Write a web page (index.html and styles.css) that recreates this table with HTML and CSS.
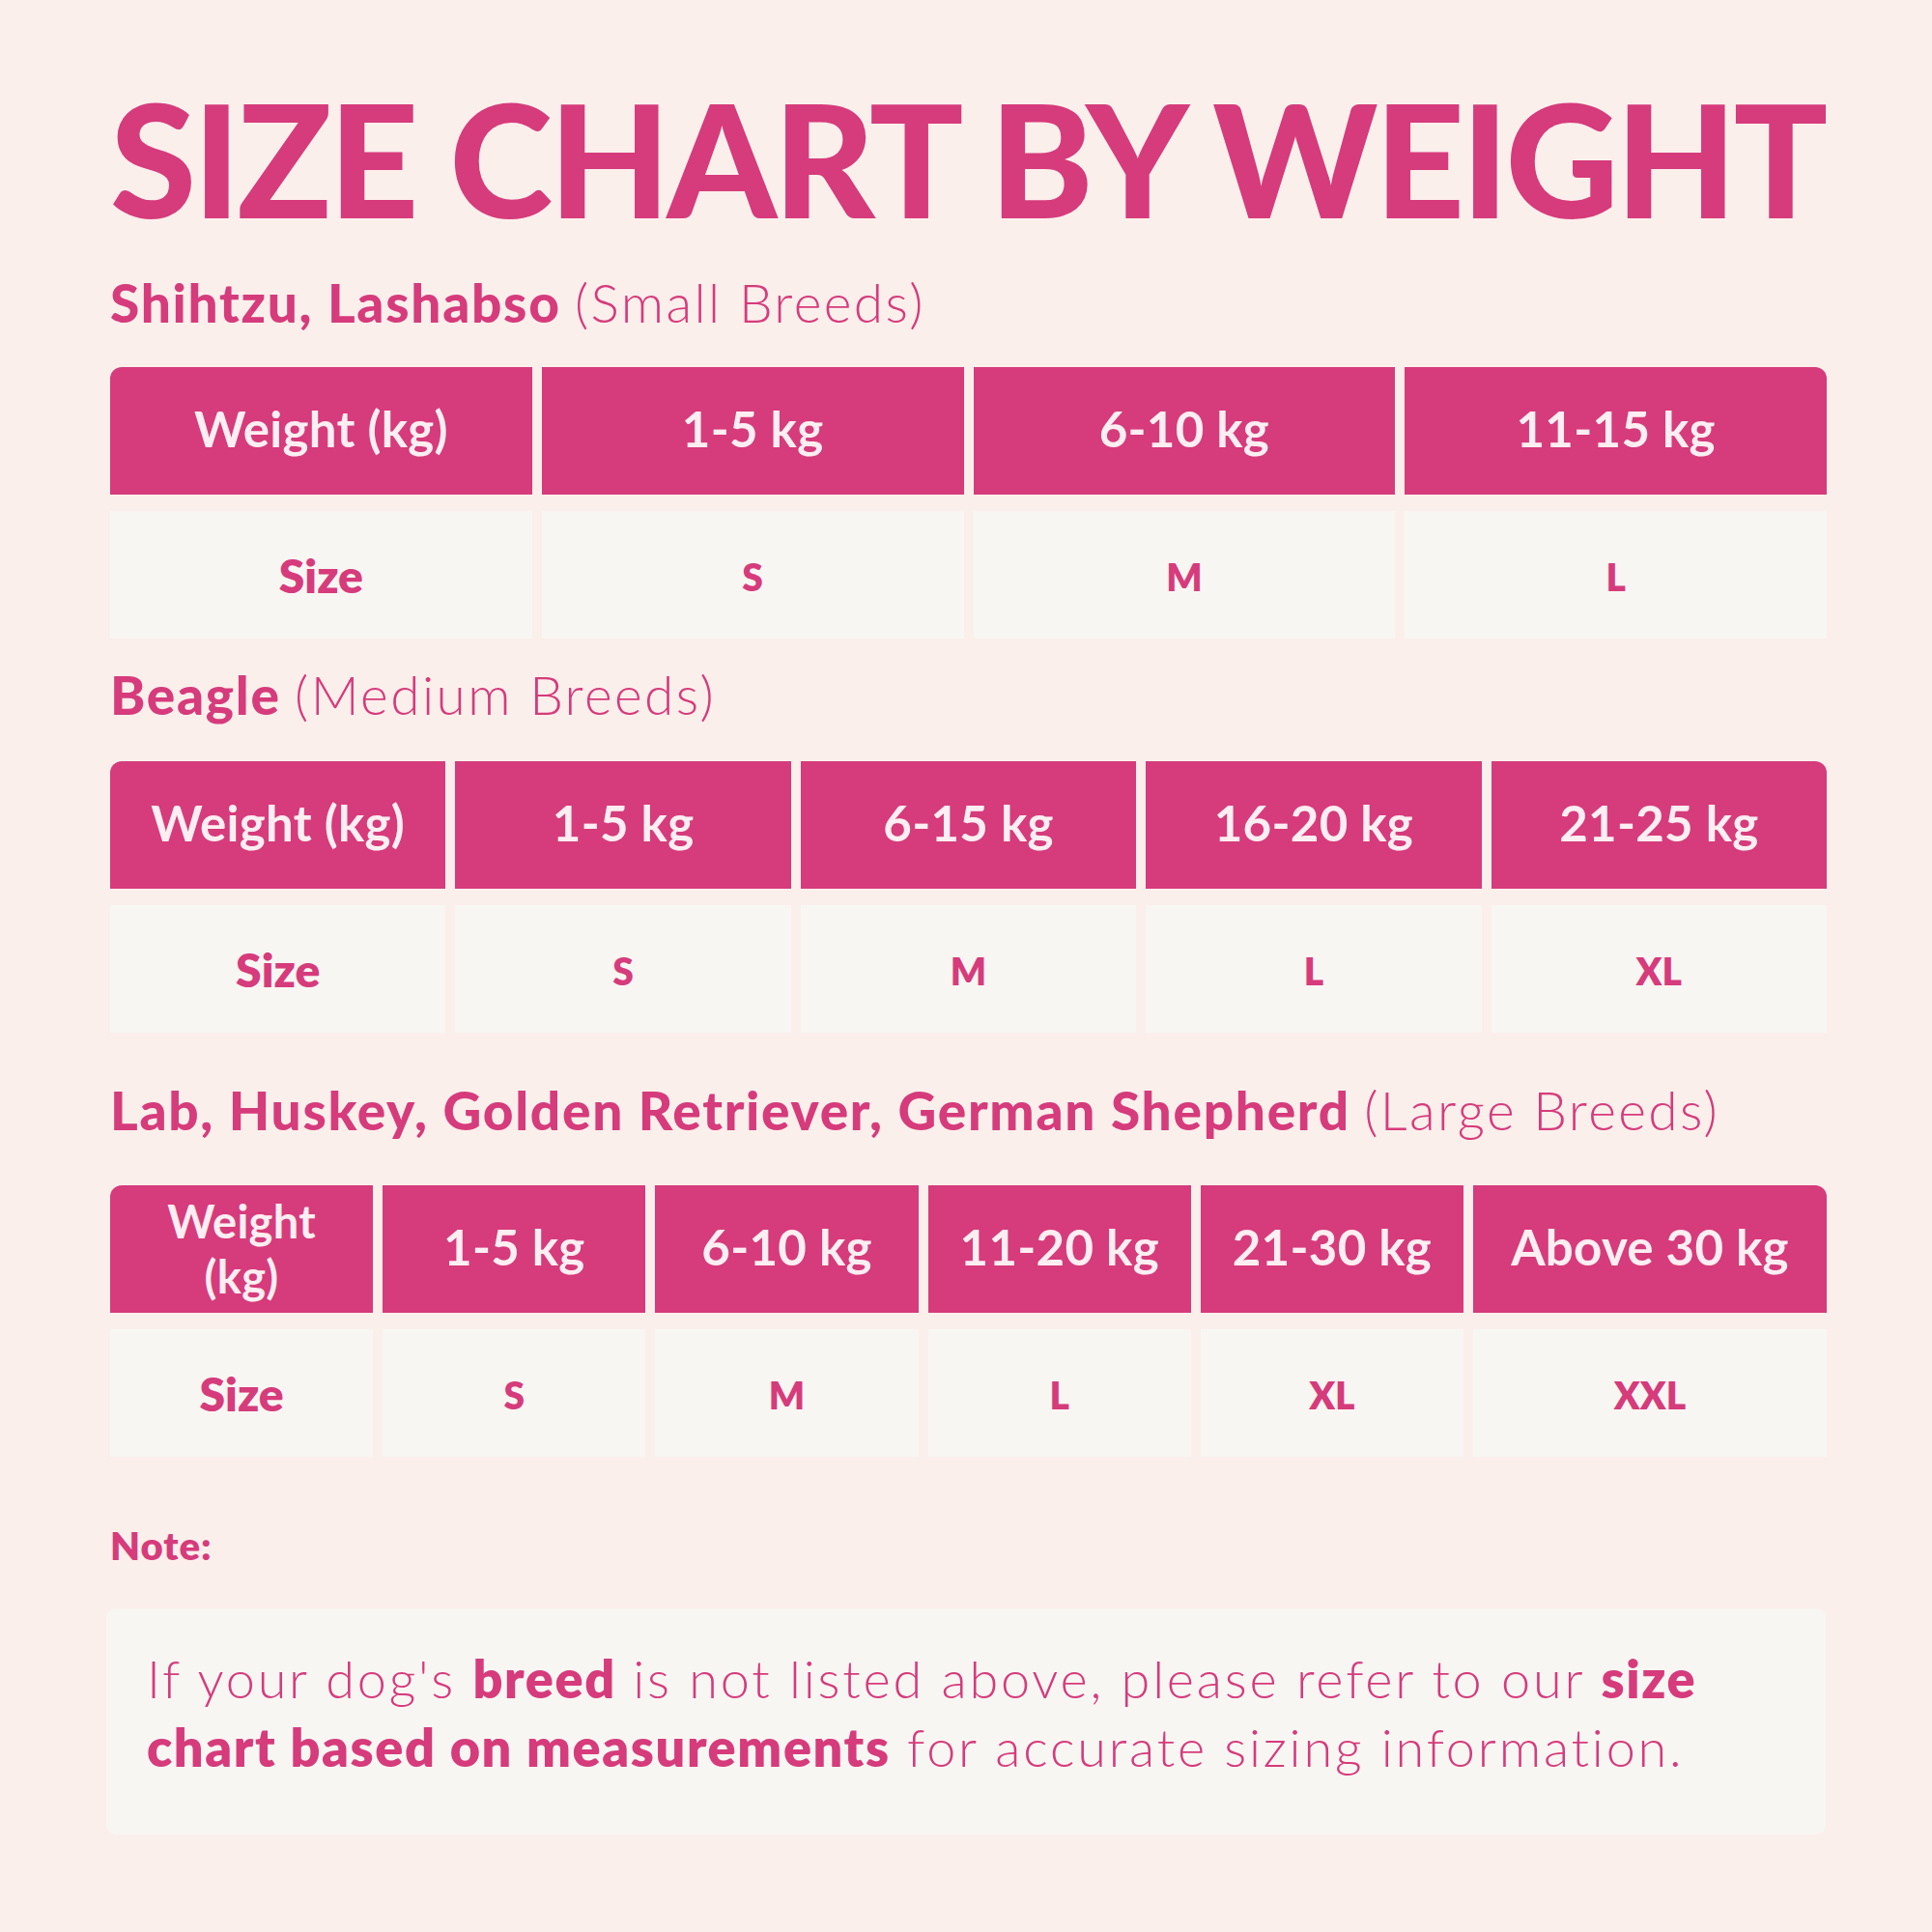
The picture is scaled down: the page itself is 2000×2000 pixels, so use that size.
FILE: index.html
```html
<!DOCTYPE html>
<html lang="en">
<head>
<meta charset="utf-8">
<title>Size Chart by Weight</title>
<link rel="stylesheet" href="styles.css">
</head>
<body>
<main class="page">
  <h1 class="title">SIZE CHART BY WEIGHT</h1>

  <h2 class="breed breed-1"><b>Shihtzu, Lashabso</b> <span>(Small Breeds)</span></h2>
  <div class="chart cols-4">
    <div class="th first">Weight (kg)</div>
    <div class="th">1-5 kg</div>
    <div class="th">6-10 kg</div>
    <div class="th last">11-15 kg</div>
    <div class="td label">Size</div>
    <div class="td">S</div>
    <div class="td">M</div>
    <div class="td">L</div>
  </div>

  <h2 class="breed breed-2"><b>Beagle</b> <span>(Medium Breeds)</span></h2>
  <div class="chart cols-5">
    <div class="th first">Weight (kg)</div>
    <div class="th">1-5 kg</div>
    <div class="th">6-15 kg</div>
    <div class="th">16-20 kg</div>
    <div class="th last">21-25 kg</div>
    <div class="td label">Size</div>
    <div class="td">S</div>
    <div class="td">M</div>
    <div class="td">L</div>
    <div class="td">XL</div>
  </div>

  <h2 class="breed breed-3"><b>Lab, Huskey, Golden Retriever, German Shepherd</b> <span>(Large Breeds)</span></h2>
  <div class="chart cols-6">
    <div class="th first narrow">Weight<br>(kg)</div>
    <div class="th">1-5 kg</div>
    <div class="th">6-10 kg</div>
    <div class="th">11-20 kg</div>
    <div class="th">21-30 kg</div>
    <div class="th last">Above 30 kg</div>
    <div class="td label">Size</div>
    <div class="td">S</div>
    <div class="td">M</div>
    <div class="td">L</div>
    <div class="td">XL</div>
    <div class="td">XXL</div>
  </div>

  <p class="note-label">Note:</p>
  <div class="note">
    <p>If your dog's <b>breed</b> is not listed above, please refer to our <b>size</b><br><b>chart based on measurements</b> for accurate sizing information.</p>
  </div>
</main>
</body>
</html>
```

FILE: styles.css
```css
html, body {
  margin: 0;
  padding: 0;
}
body {
  background: #fbefec;
  font-family: "Lato", "Liberation Sans", sans-serif;
  color: #d63b7b;
}
.page {
  width: 1777px;
  padding: 83px 0 0 114px;
}
.title {
  margin: 0;
  font-size: 162px;
  line-height: 1;
  font-weight: 900;
  letter-spacing: -3.4px;
  white-space: nowrap;
}
.breed {
  margin: 0;
  font-size: 55px;
  line-height: 1;
  font-weight: 800;
  letter-spacing: 1.7px;
  white-space: nowrap;
}
.breed span {
  font-weight: 300;
  letter-spacing: 2.4px;
}
.breed-1 { margin-top: 41px; margin-bottom: 39px; }
.breed-2 { margin-top: 31px; margin-bottom: 41px; }
.breed-3 { margin-top: 53px; margin-bottom: 50px; }

.chart {
  display: grid;
  column-gap: 10px;
  row-gap: 17px;
  grid-auto-rows: 132px;
}
.cols-4 { grid-template-columns: repeat(4, 1fr); }
.cols-5 { grid-template-columns: repeat(5, 1fr); }
.cols-6 { grid-template-columns: repeat(5, 1fr) 366px; }

.th, .td {
  display: flex;
  align-items: center;
  justify-content: center;
  text-align: center;
}
.th {
  background: #d63b7b;
  color: #fdeef2;
  font-size: 51px;
  font-weight: 700;
  line-height: 1;
  letter-spacing: 0.3px;
  padding-bottom: 6px;
  box-sizing: border-box;
}
.th.narrow {
  font-size: 47px;
  line-height: 57px;
  padding-bottom: 0;
}
.th.first { border-top-left-radius: 12px; }
.th.last { border-top-right-radius: 12px; }
.td {
  background: #f8f6f3;
  color: #d63b7b;
  font-size: 39px;
  font-weight: 800;
  padding-top: 4px;
  box-sizing: border-box;
}
.td.label {
  font-size: 48px;
  padding-top: 0;
}

.note-label {
  margin: 72px 0 0;
  font-size: 40px;
  line-height: 1;
  font-weight: 800;
  letter-spacing: 1px;
}
.note {
  margin: 45px 0 0 -4px;
  width: 1780px;
  box-sizing: border-box;
  background: #f8f6f3;
  border-radius: 10px;
  padding: 37px 40px 55px 42px;
}
.note p {
  margin: 0;
  font-size: 54px;
  line-height: 71px;
  font-weight: 300;
  letter-spacing: 2.8px;
}
.note b {
  font-weight: 800;
  letter-spacing: 1.6px;
}
```
